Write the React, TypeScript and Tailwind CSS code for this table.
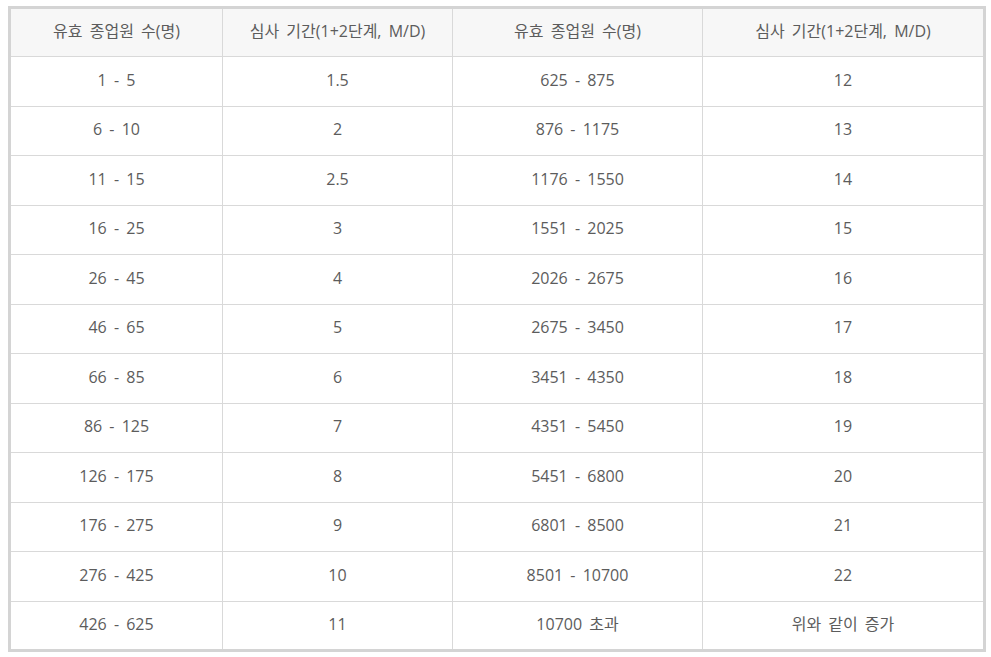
const rows: [string, string, string, string][] = [
  ["1 - 5", "1.5", "625 - 875", "12"],
  ["6 - 10", "2", "876 - 1175", "13"],
  ["11 - 15", "2.5", "1176 - 1550", "14"],
  ["16 - 25", "3", "1551 - 2025", "15"],
  ["26 - 45", "4", "2026 - 2675", "16"],
  ["46 - 65", "5", "2675 - 3450", "17"],
  ["66 - 85", "6", "3451 - 4350", "18"],
  ["86 - 125", "7", "4351 - 5450", "19"],
  ["126 - 175", "8", "5451 - 6800", "20"],
  ["176 - 275", "9", "6801 - 8500", "21"],
  ["276 - 425", "10", "8501 - 10700", "22"],
  ["426 - 625", "11", "10700 초과", "위와 같이 증가"],
];

const heads = ["유효 종업원 수(명)", "심사 기간(1+2단계, M/D)", "유효 종업원 수(명)", "심사 기간(1+2단계, M/D)"];

export default function App() {
  return (
    <div className="bg-white w-[991px] h-[657px] pl-2 pt-[6px] font-['Open_Sans','Noto_Sans_CJK_KR',sans-serif] text-[#5c5c5c] text-[16px] [word-spacing:3px]">
      <table className="w-[975px] table-fixed border-collapse border-[3px] border-[#d4d4d4]">
        <colgroup>
          <col className="w-[213px]" />
          <col className="w-[230px]" />
          <col className="w-[250px]" />
          <col className="w-[282px]" />
        </colgroup>
        <thead>
          <tr className="h-[49px] bg-[#f7f7f7]">
            {heads.map((h, i) => (
              <th key={i} className="border border-[#d9d9d9] font-normal text-center pb-[3px]">
                {h}
              </th>
            ))}
          </tr>
        </thead>
        <tbody>
          {rows.map((r, i) => (
            <tr key={i} className="h-[49.5px]">
              {r.map((c, j) => (
                <td key={j} className="border border-[#d9d9d9] text-center pb-[3px]">
                  {c}
                </td>
              ))}
            </tr>
          ))}
        </tbody>
      </table>
    </div>
  );
}
